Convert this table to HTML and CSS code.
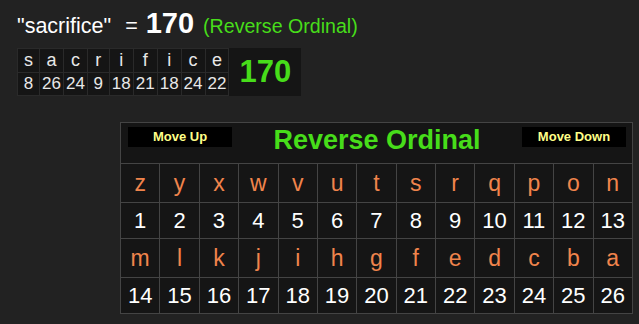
FILE: index.html
```html
<!DOCTYPE html>
<html>
<head>
<meta charset="utf-8">
<link rel="stylesheet" href="styles.css">
</head>
<body>
<div class="top">
  <div class="headline"><span class="word">"sacrifice"</span><span class="eq">=</span><span class="sum">170</span><span class="cipher">(Reverse Ordinal)</span></div>
  <table class="breakdown">
    <tr class="bl">
      <td>s</td><td>a</td><td>c</td><td>r</td><td>i</td><td>f</td><td>i</td><td>c</td><td>e</td>
      <td class="total" rowspan="2">170</td>
    </tr>
    <tr class="bn">
      <td>8</td><td>26</td><td>24</td><td>9</td><td>18</td><td>21</td><td>18</td><td>24</td><td>22</td>
    </tr>
  </table>
</div>
<table class="cipher-table">
  <tr class="head-row">
    <td colspan="13">
      <div class="head">
        <span class="btn">Move Up</span>
        <span class="title">Reverse Ordinal</span>
        <span class="btn">Move Down</span>
      </div>
    </td>
  </tr>
  <tr class="letters">
    <td>z</td><td>y</td><td>x</td><td>w</td><td>v</td><td>u</td><td>t</td><td>s</td><td>r</td><td>q</td><td>p</td><td>o</td><td>n</td>
  </tr>
  <tr class="nums">
    <td>1</td><td>2</td><td>3</td><td>4</td><td>5</td><td>6</td><td>7</td><td>8</td><td>9</td><td>10</td><td>11</td><td>12</td><td>13</td>
  </tr>
  <tr class="letters">
    <td>m</td><td>l</td><td>k</td><td>j</td><td>i</td><td>h</td><td>g</td><td>f</td><td>e</td><td>d</td><td>c</td><td>b</td><td>a</td>
  </tr>
  <tr class="nums">
    <td>14</td><td>15</td><td>16</td><td>17</td><td>18</td><td>19</td><td>20</td><td>21</td><td>22</td><td>23</td><td>24</td><td>25</td><td>26</td>
  </tr>
</table>
</body>
</html>
```

FILE: styles.css
```css
html, body {
  margin: 0;
  padding: 0;
  background: #222222;
  font-family: "Liberation Sans", Arial, sans-serif;
  color: #ffffff;
}
.top {
  padding: 8px 0 0 17px;
}
.headline {
  height: 30px;
  line-height: 30px;
  font-size: 21.5px;
  color: #ffffff;
  white-space: nowrap;
}
.headline .eq {
  margin-left: 14px;
}
.headline .sum {
  margin-left: 8px;
  font-size: 29px;
  font-weight: bold;
}
.headline .cipher {
  margin-left: 9px;
  font-size: 19.6px;
  color: #47dd1a;
}
.breakdown {
  margin-top: 10px;
  border-collapse: collapse;
  background: #151515;
}
.breakdown td {
  border: 1px solid #2a2a2a;
  padding: 0 2px;
  min-width: 17px;
  text-align: center;
  font-size: 17px;
  color: #e8e8e8;
}
.breakdown .bl td {
  height: 23px;
  font-size: 18px;
}
.breakdown .bn td {
  height: 22px;
}
.breakdown td.total {
  border: none;
  width: 50px;
  padding: 0 10px;
  font-size: 31px;
  font-weight: bold;
  color: #47dd1a;
}
.cipher-table {
  margin: 26px 0 0 120px;
  width: 513px;
  border-collapse: collapse;
  table-layout: fixed;
  background: #151515;
}
.cipher-table td {
  border: 1px solid #444444;
  padding: 0;
  text-align: center;
}
.head-row td {
  height: 40px;
}
.head {
  display: flex;
  align-items: flex-start;
  justify-content: space-between;
  padding: 4px 6px 0 7px;
  height: 36px;
}
.btn {
  width: 104px;
  height: 20px;
  line-height: 20px;
  background: #000000;
  color: #ffff88;
  font-size: 13px;
  font-weight: bold;
  text-align: center;
}
.title {
  font-size: 27px;
  font-weight: bold;
  color: #47dd1a;
  line-height: 27px;
}
.letters td {
  height: 38px;
  font-size: 23px;
  color: #f0844c;
}
.nums td {
  height: 35px;
  font-size: 22px;
  color: #ffffff;
}
```
